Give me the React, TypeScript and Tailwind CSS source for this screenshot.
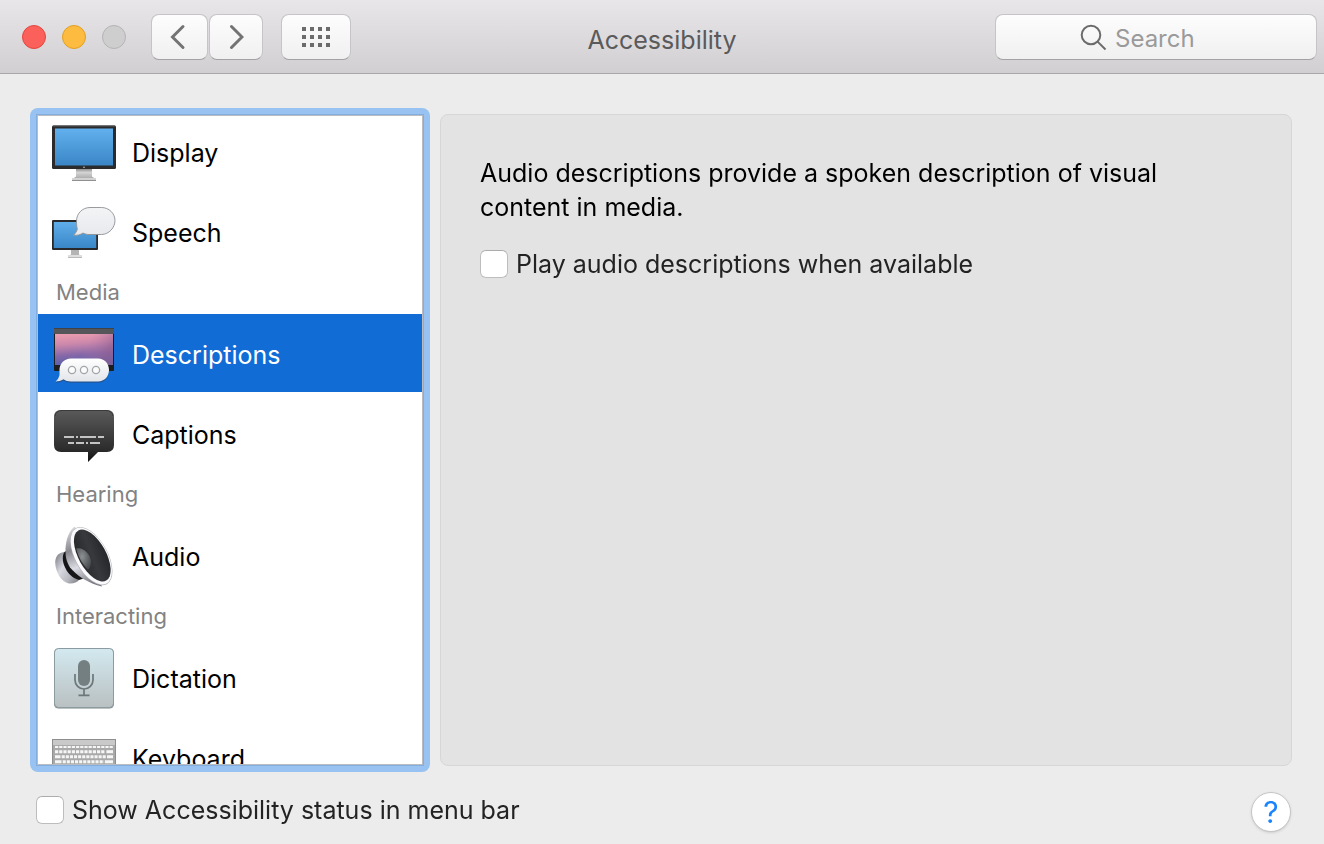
import React from "react";

function DisplayIcon() {
  return (
    <svg width="64" height="64" viewBox="0 0 64 64" aria-hidden="true">
      <defs>
        <linearGradient id="display-screen" x1="0" y1="0" x2="0" y2="1">
          <stop offset="0" stopColor="#62b0ee" />
          <stop offset="1" stopColor="#3a86c6" />
        </linearGradient>
        <linearGradient id="display-neck" x1="0" y1="0" x2="0" y2="1">
          <stop offset="0" stopColor="#7c7c7c" />
          <stop offset="0.400" stopColor="#d4d4d4" />
          <stop offset="1" stopColor="#a8a8a8" />
        </linearGradient>
      </defs>
      <path d="M24 49h16v8.500l3.500 2.500h-23l3.500-2.500z" fill="url(#display-neck)" />
      <rect x="20" y="59" width="24" height="2" rx="0.600" fill="#d2d2d2" />
      <rect x="20" y="61" width="24" height="1" fill="#8f8f8f" />
      <rect x="0" y="6.500" width="64" height="43.500" rx="1.500" fill="#2b2b2d" />
      <rect x="0.500" y="6.500" width="63" height="1" rx="0.500" fill="#55585b" />
      <rect x="3" y="9.500" width="58" height="37" fill="url(#display-screen)" />
      <circle cx="32" cy="48.300" r="0.800" fill="#c9c9c9" />
    </svg>
  );
}

function SpeechIcon() {
  return (
    <svg width="64" height="64" viewBox="0 0 64 64" aria-hidden="true">
      <defs>
        <linearGradient id="speech-screen" x1="0" y1="0" x2="0" y2="1">
          <stop offset="0" stopColor="#5fade9" />
          <stop offset="1" stopColor="#3a87c8" />
        </linearGradient>
        <linearGradient id="speech-bubble" x1="0" y1="0" x2="0" y2="1">
          <stop offset="0" stopColor="#f3f4f6" />
          <stop offset="1" stopColor="#e8e9ed" />
        </linearGradient>
      </defs>
      <path d="M19 50h8v5.500l2.500 1.500h-13l2.500-1.500z" fill="#b4b4b4" />
      <rect x="16" y="56" width="14" height="2" fill="#dedede" />
      <rect x="16" y="58" width="14" height="0.700" fill="#9c9c9c" />
      <rect x="0" y="21" width="46" height="30" rx="1" fill="#29292b" />
      <rect x="1.800" y="23" width="42.400" height="26" fill="url(#speech-screen)" />
      <path
        d="M38 8.500H49.500C57 8.500 63 14.500 63 21.500S57 35.500 49.500 35.500H37C34.500 35.500 32.500 34.800 31 34C28.500 35.800 25.500 36.500 21.500 36.200C23.500 34.500 24.800 32.200 25.300 30C24.700 28 24.500 25 24.500 22C24.500 14.500 30.500 8.500 38 8.500Z"
        fill="url(#speech-bubble)"
        stroke="#8d9094"
        strokeWidth="0.900"
      />
    </svg>
  );
}

function DescriptionsIcon() {
  return (
    <svg width="64" height="64" viewBox="0 0 64 64" aria-hidden="true">
      <defs>
        <linearGradient id="desc-sky" x1="0" y1="0" x2="0.150" y2="1">
          <stop offset="0" stopColor="#ee9fb0" />
          <stop offset="0.350" stopColor="#cc88ab" />
          <stop offset="0.700" stopColor="#8768a8" />
          <stop offset="1" stopColor="#5b60a8" />
        </linearGradient>
        <linearGradient id="desc-light" x1="0" y1="0" x2="1" y2="0.300">
          <stop offset="0.600" stopColor="#b878a8" stopOpacity="0" />
          <stop offset="1" stopColor="#935f8f" stopOpacity="0.600" />
        </linearGradient>
        <linearGradient id="desc-bubble" x1="0" y1="0" x2="0" y2="1">
          <stop offset="0" stopColor="#ffffff" />
          <stop offset="1" stopColor="#e3e5e9" />
        </linearGradient>
      </defs>
      <rect x="2" y="7" width="60" height="43" rx="1" fill="#1c1d20" />
      <rect x="2" y="7" width="60" height="6" rx="1" fill="#54565a" />
      <rect x="2" y="7" width="60" height="1" fill="#404246" />
      <rect x="3" y="13" width="58" height="31" fill="url(#desc-sky)" />
      <rect x="3" y="13" width="58" height="31" fill="url(#desc-light)" />
      <path
        d="M19 38H46C52.500 38 57 43 57 49.200S52.500 61 46 61H19C16 61 13.500 60.300 11.500 58.800C9 60.500 6.500 61 3.500 61C5.500 59.500 7 57 7.500 54.500V49.200C7.500 43 12.500 38 19 38Z"
        fill="#33405a"
        opacity="0.550"
        transform="translate(0 0.800)"
      />
      <path
        d="M19 37.500H46C52.500 37.500 57 42.500 57 49S52.500 60.500 46 60.500H19C16 60.500 13.500 59.800 11.500 58.300C9 60 6.500 60.500 3.500 60.500C5.500 59 7 56.500 7.500 54V49C7.500 42.500 12.500 37.500 19 37.500Z"
        fill="url(#desc-bubble)"
      />
      <g fill="#fbfbfc" stroke="#a3a6a9" strokeWidth="1.300">
        <circle cx="20" cy="49" r="3.600" />
        <circle cx="32" cy="49" r="3.600" />
        <circle cx="44" cy="49" r="3.600" />
      </g>
    </svg>
  );
}

function CaptionsIcon() {
  return (
    <svg width="64" height="64" viewBox="0 0 64 64" aria-hidden="true">
      <defs>
        <linearGradient id="cap-body" gradientUnits="userSpaceOnUse" x1="0" y1="9" x2="0" y2="60">
          <stop offset="0" stopColor="#5a5a5a" />
          <stop offset="0.780" stopColor="#2c2c2c" />
          <stop offset="1" stopColor="#111111" />
        </linearGradient>
      </defs>
      <path
        d="M9 9H55Q62 9 62 16V44Q62 51 55 51H46L36 61V51H9Q2 51 2 44V16Q2 9 9 9Z"
        fill="url(#cap-body)"
      />
      <path d="M3 15Q4 9.500 10 9.500H54Q60 9.500 61 15" fill="none" stroke="#393939" />
      <path
        d="M12 36h10M24 36h2M28 36h16M46 36h6M16 42h6M24 42h8M34 42h2M38 42h10"
        stroke="#c4c4c4"
        strokeWidth="2"
      />
    </svg>
  );
}

function AudioIcon() {
  return (
    <svg width="64" height="64" viewBox="0 0 64 64" aria-hidden="true">
      <defs>
        <linearGradient id="aud-back" x1="0" y1="0.200" x2="0.900" y2="1">
          <stop offset="0" stopColor="#8b8b92" />
          <stop offset="0.350" stopColor="#d9d9e2" />
          <stop offset="0.700" stopColor="#b9b9c2" />
          <stop offset="1" stopColor="#85858b" />
        </linearGradient>
        <linearGradient id="aud-horn" gradientUnits="userSpaceOnUse" x1="17" y1="6" x2="38" y2="62">
          <stop offset="0" stopColor="#d8d8dc" />
          <stop offset="0.350" stopColor="#88888f" />
          <stop offset="0.650" stopColor="#dcdce4" />
          <stop offset="1" stopColor="#77777d" />
        </linearGradient>
        <linearGradient id="aud-cone" x1="0" y1="0" x2="1" y2="0.300">
          <stop offset="0" stopColor="#242528" />
          <stop offset="0.600" stopColor="#38393c" />
          <stop offset="1" stopColor="#292a2d" />
        </linearGradient>
        <radialGradient id="aud-dome" cx="0.400" cy="0.400" r="0.650">
          <stop offset="0" stopColor="#8d9193" />
          <stop offset="1" stopColor="#4a4c4f" />
        </radialGradient>
      </defs>
      <path d="M12 29C6 30 3.200 34 3.200 39.500C3.500 49 9 59 17 60.500C21 61 25 59.500 27 57Z" fill="url(#aud-back)" />
      <path d="M13 28.500C10.500 31 10 36 12 42C15 50 20 55 27 57L33 55L16 28Z" fill="#161618" />
      <path d="M23 3.500C17 7 14 17 13.500 25C13.300 33 14 38 18 44.500C24 52 37 61 50 63.500Z" fill="url(#aud-horn)" />
      <ellipse cx="39.300" cy="33.200" rx="16.400" ry="32" transform="rotate(-29 39.300 33.200)" fill="#b0b0b5" />
      <ellipse cx="39.300" cy="33" rx="15.900" ry="31.400" transform="rotate(-29 39.300 33)" fill="#fbfbfd" />
      <ellipse cx="40.300" cy="32.500" rx="13.700" ry="28.700" transform="rotate(-29 40.300 32.500)" fill="url(#aud-cone)" />
      <path d="M24.200 25.500C31 23.500 38.500 31 39 38.500C39 42 38 45 36 46.500C29.500 40.500 26 33 24.200 25.500Z" fill="url(#aud-dome)" />
    </svg>
  );
}

function DictationIcon() {
  return (
    <svg width="64" height="64" viewBox="0 0 64 64" aria-hidden="true">
      <defs>
        <linearGradient id="dict-tile" x1="0" y1="0" x2="0" y2="1">
          <stop offset="0" stopColor="#d3e9f0" />
          <stop offset="1" stopColor="#b9c0c1" />
        </linearGradient>
      </defs>
      <rect x="2" y="3.500" width="60" height="60" rx="4.500" fill="#7d8788" />
      <rect x="2.500" y="3.500" width="59" height="59" rx="4" fill="url(#dict-tile)" stroke="#8b9b9f" />
      <rect x="26" y="15" width="12" height="26" rx="6" fill="#737f81" />
      <path
        d="M23 29v6a9 9 0 0 0 18 0v-6M32 44v6M26.500 50.300h11"
        fill="none"
        stroke="#6b7779"
        strokeWidth="1.700"
      />
    </svg>
  );
}

function KeyboardIcon() {
  return (
    <svg width="64" height="64" viewBox="0 0 64 64" aria-hidden="true">
      <rect x="0.500" y="14.500" width="63" height="36" fill="#a9a9a9" stroke="#8e8e8e" />
      <rect x="1" y="15" width="62" height="5" fill="#c9c9c9" />
      <g stroke="#f6f6f6">
        <path d="M3 22h58" strokeWidth="2" strokeDasharray="3.200 1" />
        <path d="M3 26.700h49.500" strokeWidth="3" strokeDasharray="3.200 1" />
        <path d="M54.400 26.700h6.600" strokeWidth="3" />
        <path d="M3 31.700h5.500M55 31.700h6" strokeWidth="3" />
        <path d="M9.700 31.700h44.500" strokeWidth="3" strokeDasharray="3.100 1" />
        <path d="M3 36.700h6.500M53 36.700h8" strokeWidth="3" />
        <path d="M10.700 36.700h41.500" strokeWidth="3" strokeDasharray="3.100 1" />
        <path d="M3 41.700h8M51 41.700h10M12.500 41.700h37" strokeWidth="3" strokeDasharray="8 1" />
      </g>
    </svg>
  );
}

type Entry = { name: string; icon: () => React.ReactElement; selected?: boolean };
type Section = { title?: string; entries: Entry[] };

const sections: Section[] = [
  {
    entries: [
      { name: "Display", icon: DisplayIcon },
      { name: "Speech", icon: SpeechIcon },
    ],
  },
  {
    title: "Media",
    entries: [
      { name: "Descriptions", icon: DescriptionsIcon, selected: true },
      { name: "Captions", icon: CaptionsIcon },
    ],
  },
  { title: "Hearing", entries: [{ name: "Audio", icon: AudioIcon }] },
  {
    title: "Interacting",
    entries: [
      { name: "Dictation", icon: DictationIcon },
      { name: "Keyboard", icon: KeyboardIcon },
    ],
  },
];

const toolButton =
  "flex h-[46px] items-center justify-center rounded-lg border border-[#c6c4c7] border-b-[#a3a1a4] bg-linear-to-b from-[#fdfdfd] to-[#f0f0f0]";

function Check({ label }: { label: string }) {
  return (
    <label className="flex items-center gap-2 text-[25px] leading-[34px] text-[#232323]">
      <input
        type="checkbox"
        className="size-7 shrink-0 appearance-none rounded-md border border-[#bdbdbd] border-t-[#acacac] bg-white checked:bg-[#116cd6]"
      />
      {label}
    </label>
  );
}

function Toolbar() {
  return (
    <header className="grid h-[74px] shrink-0 grid-cols-[1fr_auto_1fr] items-center border-b border-[#a9a7aa] bg-linear-to-b from-[#e8e6e9] to-[#d1cfd2] px-[7px]">
      <div className="ml-[15px] flex items-center">
        <div className="flex gap-4">
          <button aria-label="Close" className="size-6 rounded-full border border-[#e2463f] bg-[#fc605b]" />
          <button aria-label="Minimize" className="size-6 rounded-full border border-[#dfa023] bg-[#fdbc40]" />
          <button aria-label="Zoom" disabled className="size-6 rounded-full border border-[#b4b4b4] bg-[#cecece]" />
        </div>
        <div className="ml-[25px] flex gap-px">
          <button aria-label="Back" className={`${toolButton} w-[57px]`}>
            <svg width="20" height="26" viewBox="0 0 20 26" fill="none" stroke="#737373" strokeWidth="3" strokeLinecap="round">
              <path d="M13 2.500L2.500 13l10.500 10.500" />
            </svg>
          </button>
          <button aria-label="Forward" className={`${toolButton} w-[54px]`}>
            <svg width="16" height="26" viewBox="0 0 16 26" fill="none" stroke="#737373" strokeWidth="3" strokeLinecap="round">
              <path d="M3.500 2.500L14 13 3.500 23.500" />
            </svg>
          </button>
        </div>
        <button aria-label="Show all" className={`${toolButton} ml-[18px] w-[70px]`}>
          <svg width="28" height="20" viewBox="0 0 28 20" stroke="#6b6b6b" strokeWidth="4" strokeDasharray="4 4">
            <path d="M0 2h28M0 10h28M0 18h28" />
          </svg>
        </button>
      </div>
      <h1 className="pt-1.5 text-[25px] leading-8 text-[#5a5a5a]">Accessibility</h1>
      <label className="flex h-[46px] w-[322px] items-center gap-2 justify-self-end rounded-lg border border-[#c6c4c7] border-b-[#a3a1a4] bg-linear-to-b from-[#fdfdfd] to-[#f0f0f0] pt-0.5 pl-[84px]">
        <svg width="27" height="27" viewBox="0 0 27 27" fill="none" stroke="#6b6b6b" strokeWidth="2" className="shrink-0">
          <circle cx="11" cy="11" r="9.300" />
          <path d="M17.600 17.600L25.500 25.500" />
        </svg>
        <input
          type="text"
          aria-label="Search"
          placeholder="Search"
          className="min-w-0 flex-1 bg-transparent pt-0.5 text-[24px] leading-8 text-[#333] outline-none placeholder:text-[#9a9a9a]"
        />
      </label>
    </header>
  );
}

function Sidebar() {
  return (
    <nav className="w-[400px] shrink-0 rounded-lg bg-[#97c2f2] p-1.5">
      <div className="h-full overflow-hidden border border-[#83addd]">
        <div className="h-full overflow-x-hidden overflow-y-auto border border-[#b9bcc0] bg-white [scrollbar-width:none]">
          <div className="-mt-1 flex flex-col gap-0.5">
            {sections.map((section, i) => (
              <section key={i} className="flex flex-col gap-0.5">
                {section.title && (
                  <h2 className="pl-[18px] text-[22px] leading-10 text-[#828282]">{section.title}</h2>
                )}
                {section.entries.map(({ name, icon: Icon, selected }) => (
                  <button
                    key={name}
                    className={`flex h-[78px] shrink-0 items-center gap-4 pl-3.5 text-left text-[25px] leading-8 ${
                      selected ? "bg-[#116cd6] text-white" : "text-black"
                    }`}
                  >
                    <Icon />
                    <span className="pt-1">{name}</span>
                  </button>
                ))}
              </section>
            ))}
          </div>
        </div>
      </div>
    </nav>
  );
}

export default function App() {
  return (
    <div className="flex h-screen flex-col bg-[#ececec] font-['Inter','Liberation_Sans',sans-serif]">
      <Toolbar />
      <main className="flex min-h-0 flex-1 gap-2.5 pt-[34px] pr-8 pl-[30px]">
        <Sidebar />
        <section className="my-1.5 min-w-0 flex-1 rounded-lg border border-[#d6d6d6] bg-[#e3e3e3] px-[39px] py-[41px]">
          <p className="max-w-[740px] text-[25px] leading-[34px] text-black">
            Audio descriptions provide a spoken description of visual content in media.
          </p>
          <div className="pt-[23px]">
            <Check label="Play audio descriptions when available" />
          </div>
        </section>
      </main>
      <footer className="flex shrink-0 items-center justify-between pt-5 pr-[33px] pb-3 pl-9">
        <div className="pb-1">
          <Check label="Show Accessibility status in menu bar" />
        </div>
        <button
          aria-label="Help"
          className="flex size-10 items-center justify-center rounded-full border border-[#c4c4c4] bg-white text-[30px] leading-none text-[#1a84ff] shadow-sm"
        >
          ?
        </button>
      </footer>
    </div>
  );
}
